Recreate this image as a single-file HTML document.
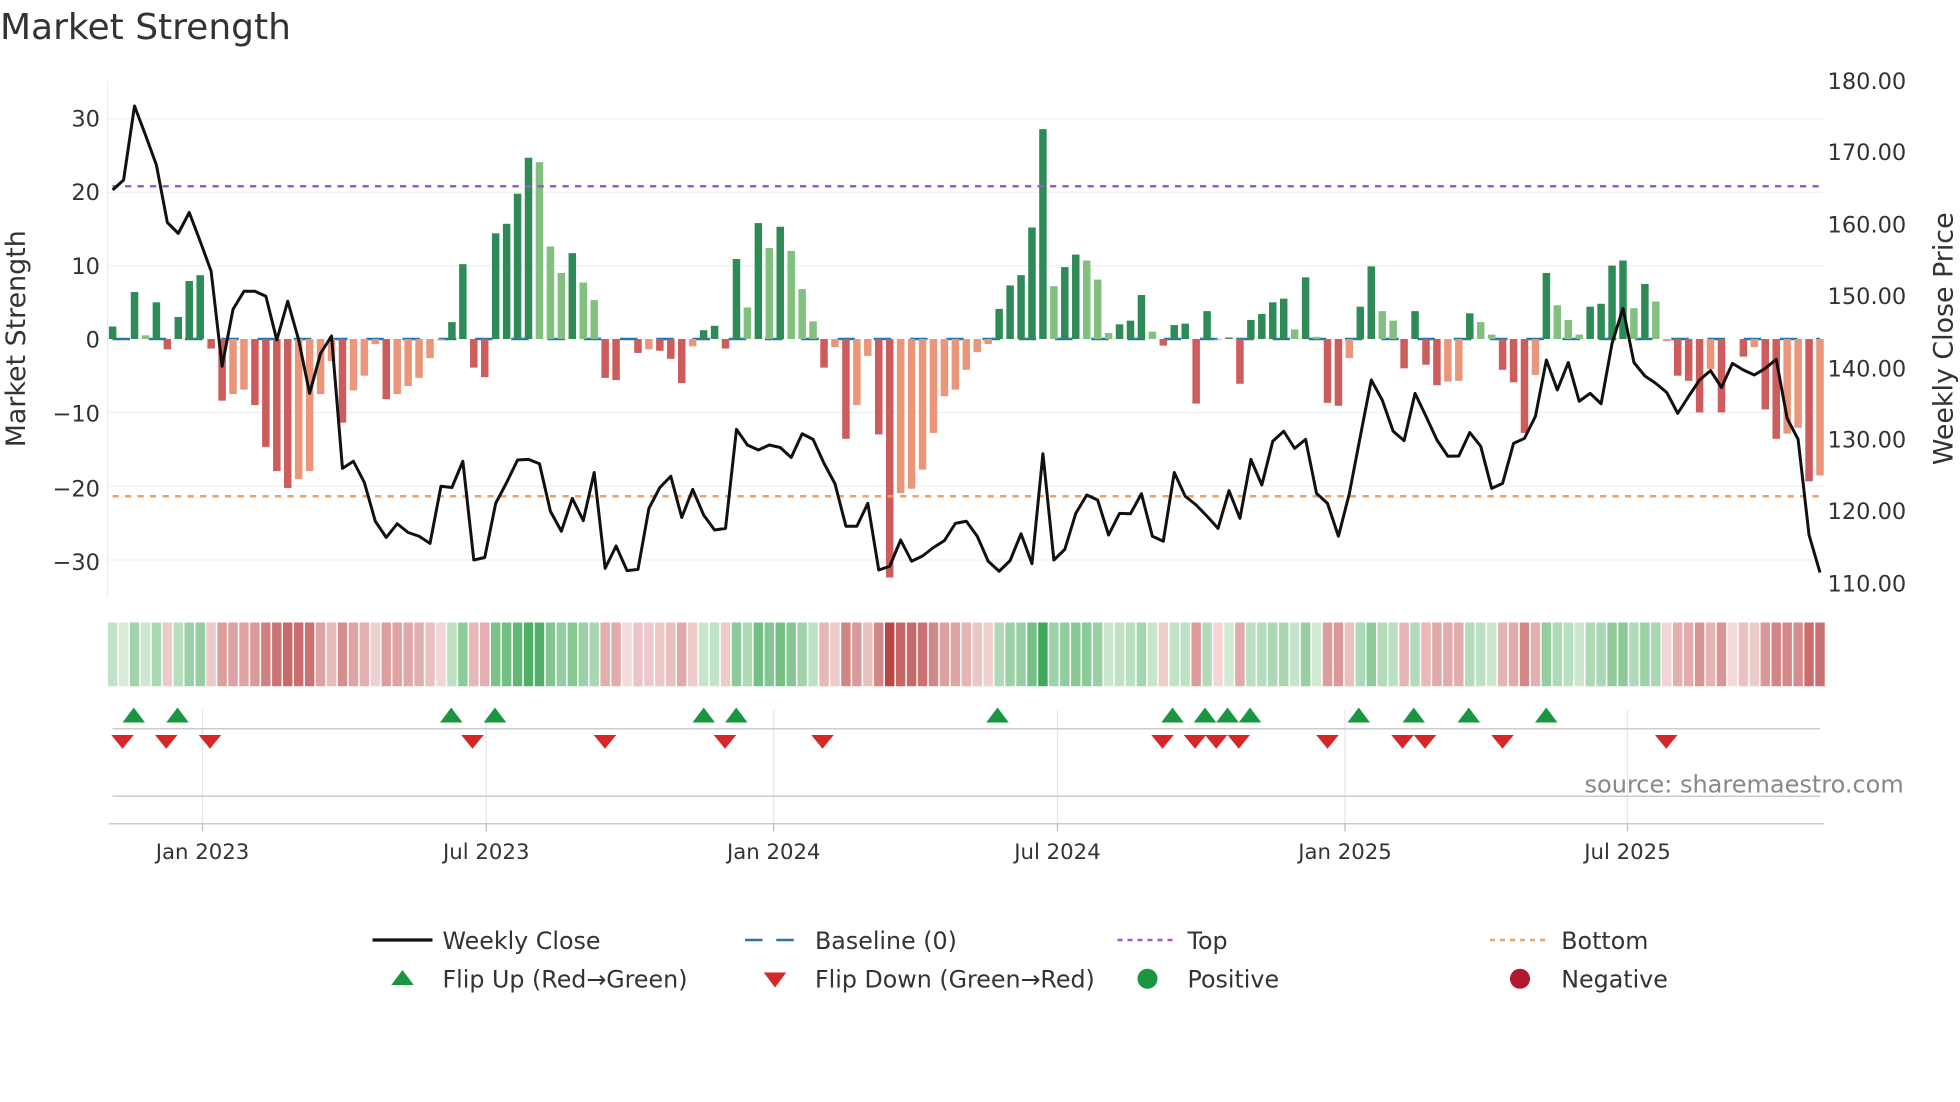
<!DOCTYPE html>
<html><head><meta charset="utf-8">
<style>
html,body{margin:0;padding:0;background:#fff;}
svg{display:block;}
text{font-family:"DejaVu Sans","Liberation Sans",sans-serif;fill:#333;}
</style></head>
<body>
<svg id="s" width="1960" height="1102" viewBox="0 0 1568 881.6" xmlns="http://www.w3.org/2000/svg">
<rect width="1568" height="881.6" fill="#fff"/>
<text x="0" y="31" font-size="28.8">Market Strength</text>
<g id="grid"></g>
<line x1="86" y1="65" x2="86" y2="478" stroke="#eceef2" stroke-width="1"/>
<line x1="90" y1="271.2" x2="1456" y2="271.2" stroke="#1f77b4" stroke-width="2" stroke-dasharray="14,15"/>
<g id="bars"></g>
<line x1="90" y1="149" x2="1456" y2="149" stroke="#9b59d0" stroke-width="2" stroke-dasharray="5,5"/>
<line x1="90" y1="397" x2="1456" y2="397" stroke="#f0a060" stroke-width="2" stroke-dasharray="5,5"/>
<polyline id="price" fill="none" stroke="#111" stroke-width="2.4" stroke-linejoin="round"/>
<g font-size="18" text-anchor="end">
<text x="80" y="101">30</text><text x="80" y="160">20</text><text x="80" y="219">10</text>
<text x="80" y="278">0</text><text x="80" y="337">−10</text><text x="80" y="397">−20</text><text x="80" y="456">−30</text>
</g>
<g font-size="18">
<text x="1462" y="71">180.00</text><text x="1462" y="128">170.00</text><text x="1462" y="186">160.00</text>
<text x="1462" y="243">150.00</text><text x="1462" y="301">140.00</text><text x="1462" y="358">130.00</text>
<text x="1462" y="415">120.00</text><text x="1462" y="473">110.00</text>
</g>
<text transform="translate(20,271) rotate(-90)" font-size="21.5" text-anchor="middle">Market Strength</text>
<text transform="translate(1562,271) rotate(-90)" font-size="21.5" text-anchor="middle">Weekly Close Price</text>
<g id="heat"></g>
<g stroke="#e6e6e6" stroke-width="1">
<line x1="162" y1="568" x2="162" y2="659"/><line x1="389" y1="568" x2="389" y2="659"/>
<line x1="619" y1="568" x2="619" y2="659"/><line x1="846" y1="568" x2="846" y2="659"/>
<line x1="1076" y1="568" x2="1076" y2="659"/><line x1="1302" y1="568" x2="1302" y2="659"/>
</g>
<line x1="90" y1="583" x2="1456" y2="583" stroke="#ccc" stroke-width="1.2"/>
<line x1="90" y1="637" x2="1456" y2="637" stroke="#ccc" stroke-width="1.2"/>
<line x1="87" y1="659" x2="1459" y2="659" stroke="#ccc" stroke-width="1.2"/>
<g id="marks"></g>
<text x="1523" y="634" font-size="19.2" text-anchor="end" style="fill:#888">source: sharemaestro.com</text>
<g stroke="#bbb"><line x1="162" y1="659" x2="162" y2="665"/><line x1="389" y1="659" x2="389" y2="665"/><line x1="619" y1="659" x2="619" y2="665"/><line x1="846" y1="659" x2="846" y2="665"/><line x1="1076" y1="659" x2="1076" y2="665"/><line x1="1302" y1="659" x2="1302" y2="665"/></g>
<g font-size="17" text-anchor="middle">
<text x="162" y="687">Jan 2023</text><text x="389" y="687">Jul 2023</text><text x="619" y="687">Jan 2024</text>
<text x="846" y="687">Jul 2024</text><text x="1076" y="687">Jan 2025</text><text x="1302" y="687">Jul 2025</text>
</g>
<g font-size="19">
<line x1="298" y1="752" x2="346" y2="752" stroke="#111" stroke-width="2.6"/>
<text x="354" y="759">Weekly Close</text>
<line x1="596" y1="752" x2="642" y2="752" stroke="#1f77b4" stroke-width="2" stroke-dasharray="14,11"/>
<text x="652" y="759">Baseline (0)</text>
<line x1="894" y1="752" x2="940" y2="752" stroke="#9b59d0" stroke-width="2" stroke-dasharray="4,4"/>
<text x="950" y="759">Top</text>
<line x1="1192" y1="752" x2="1238" y2="752" stroke="#f0a060" stroke-width="2" stroke-dasharray="4,4"/>
<text x="1249" y="759">Bottom</text>
<polygon points="313,788 322,776 331,788" fill="#1a9641"/>
<text x="354" y="790">Flip Up (Red→Green)</text>
<polygon points="611,778 629,778 620,790" fill="#d62728"/>
<text x="652" y="790">Flip Down (Green→Red)</text>
<circle cx="918" cy="783" r="8" fill="#1a9641"/>
<text x="950" y="790">Positive</text>
<circle cx="1216" cy="783" r="8" fill="#b2182b"/>
<text x="1249" y="790">Negative</text>
</g>
</svg>
<script>
var NS="http://www.w3.org/2000/svg";
function el(p,t,a){var e=document.createElementNS(NS,t);for(var k in a)e.setAttribute(k,a[k]);document.getElementById(p).appendChild(e);return e;}
[95.1,153.8,212.5,330,389,448].forEach(function(y){el("grid","line",{x1:86,x2:1459,y1:y,y2:y,stroke:"#eef0f4","stroke-width":1});});
var raw="1.7G,0G,6.4G,0.5g,5G,-1.4R,3G,7.9G,8.7G,-1.3R,-8.4R,-7.5r,-6.9r,-9R,-14.7R,-18R,-20.3R,-19.1r,-18r,-7.5r,-3r,-11.4R,-7r,-5r,-0.7r,-8.2R,-7.5r,-6.4r,-5.3r,-2.6r,-0.2r,2.3G,10.2G,-3.9R,-5.2R,14.4G,15.7G,19.8G,24.7G,24.1g,12.6g,9g,11.7G,7.7g,5.3g,-5.3R,-5.6R,0R,-1.9R,-1.4r,-1.6R,-2.7R,-6R,-1r,1.2G,1.8G,-1.3R,10.9G,4.3g,15.8G,12.4g,15.3G,12g,6.8g,2.4g,-3.9R,-1.1r,-13.6R,-9r,-2.3r,-13R,-32.5R,-21r,-20.4r,-17.8r,-12.8r,-7.8r,-6.9r,-4.2r,-1.8r,-0.7r,4.1G,7.3G,8.7G,15.2G,28.6G,7.2g,9.8G,11.5G,10.7g,8.1g,0.8g,2G,2.5G,6G,1g,-0.9R,1.9G,2.1G,-8.8R,3.8G,-0.1r,0.2G,-6.1R,2.6G,3.4G,5G,5.5G,1.3g,8.4G,0.3g,-8.7R,-9.1R,-2.6r,4.4G,9.9G,3.8g,2.5g,-4R,3.8G,-3.5R,-6.3R,-5.8r,-5.7r,3.5G,2.3g,0.6g,-4.2R,-5.9R,-12.8R,-4.9r,9G,4.6g,2.6g,0.6g,4.4G,4.8G,10G,10.7G,4.2g,7.5G,5.1g,-0.3r,-5R,-5.7R,-10R,-4.1r,-10R,0R,-2.4R,-1.1r,-9.6R,-13.6R,-12.9r,-12.1r,-19.4R,-18.6r";
var cols={G:"#2e8b57",g:"#82c07f",R:"#cd5c5c",r:"#e9967a"};
var items=raw.split(",");
var x0=90.1,dx=(1456-90.1)/156;
var py=[152,144,84.8,108,132,178,186.7,170,193,217,293,247.5,233,233,237,272,241,272,314.7,282.7,268.8,374.7,369,386,417,430,419,426,429,434.7,389,390,369,448,446,402.7,386,368,367.5,371,409,425,398.7,416.5,378,454.7,436.8,456.5,455.5,406.7,390,381,414,391.5,412,424,422.7,343.5,356,360,356,358,366,347,351.5,370.7,387,421,421,402.7,456,453,432,449,444.8,438,432.5,418.7,417,429,449,457,448.5,427,451,363,448,439.5,410.7,396,400,428,410.7,411,395,429,433,378,397,404,413,422.7,392.5,414.7,367.5,388,353,345,358.7,351.5,394.7,402.7,429,394.7,349,304,320,345,352.5,314.7,333,352,365,364.8,346,357,390.7,386.7,354.7,350.7,333,288,312,290,321,314.7,323,274.7,246.7,290,300.8,306.7,314,330.7,317,304,296.5,310,290.7,296,300,294.7,287.5,334.7,351.5,428,458];
var pts=[];
function mix(a,b,t){return "rgb("+a.map(function(v,i){return Math.round(v+(b[i]-v)*t);}).join(",")+")";}
items.forEach(function(s,i){
  var c=s.slice(-1),v=parseFloat(s);var x=x0+dx*i;
  var y0=271.2,y1=271.2-5.87*v;
  if(Math.abs(v)>0.05) el("bars","rect",{x:(x-3).toFixed(2),y:Math.min(y0,y1).toFixed(2),width:6,height:Math.abs(y1-y0).toFixed(2),fill:cols[c]});
  pts.push(x.toFixed(2)+","+py[i]);
  var t=Math.min(Math.abs(v)/30,1);t=Math.pow(t,0.7);
  var f=(v>0||(v==0&&c=="G"))?mix([214,236,216],[60,165,85],t):mix([244,218,218],[185,70,70],t);
  el("heat","rect",{x:(x-dx/2+0.6).toFixed(2),y:498,width:(dx-1.2).toFixed(2),height:51,fill:f});
});
document.getElementById("price").setAttribute("points",pts.join(" "));
[107,142,361,396,563,589,798,938,964,982,1000,1087,1131,1175,1237].forEach(function(x){el("marks","polygon",{points:(x-9)+",578 "+x+",566 "+(x+9)+",578",fill:"#1a9641"});});
[98,133,168,378,484,580,658,930,956,973,991,1062,1122,1140,1202,1333].forEach(function(x){el("marks","polygon",{points:(x-9)+",588 "+(x+9)+",588 "+x+",599",fill:"#d62728"});});
</script>
</body></html>
